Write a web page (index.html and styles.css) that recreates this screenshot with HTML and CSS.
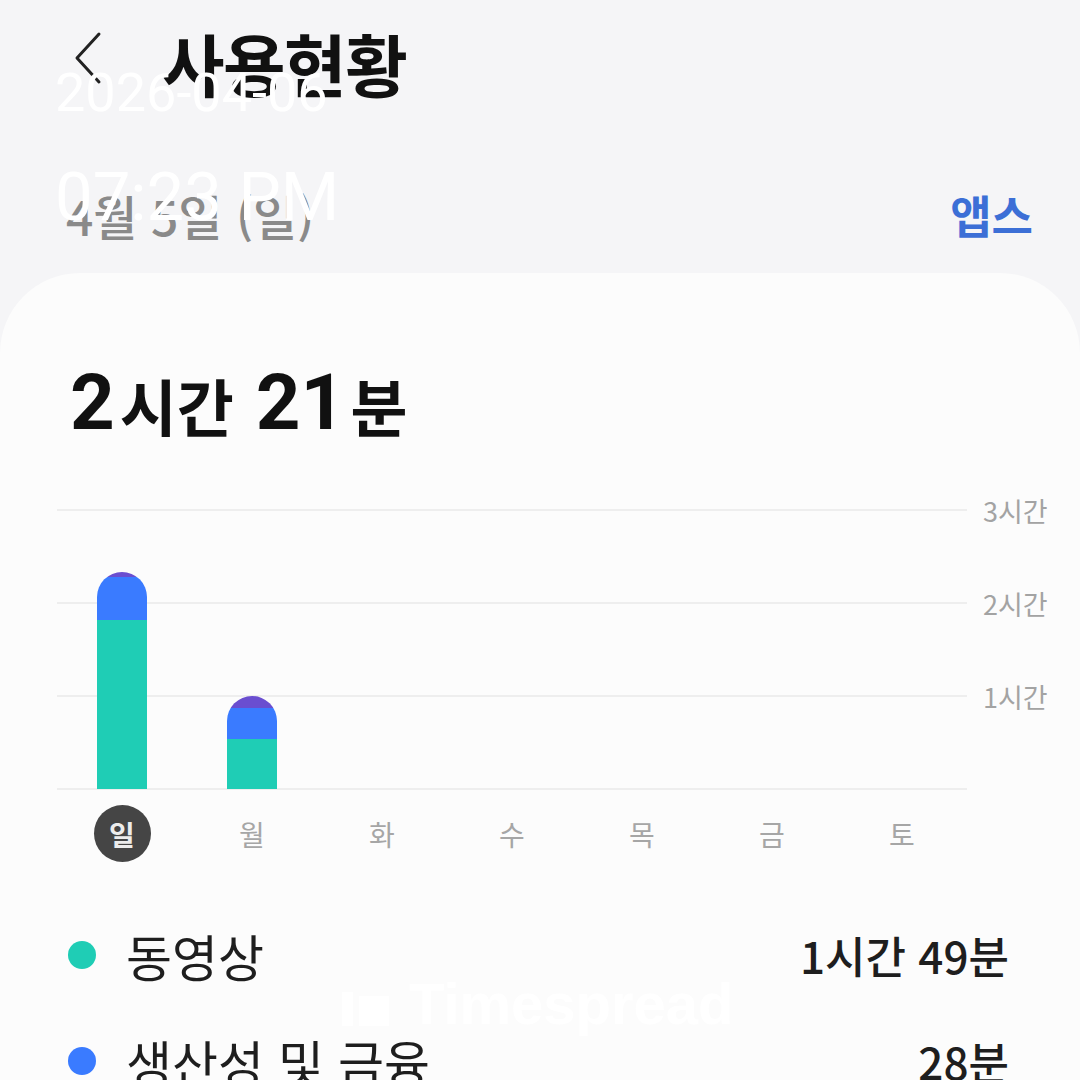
FILE: index.html
```html
<!DOCTYPE html>
<html lang="ko">
<head>
    <meta charset="UTF-8">
    <meta name="viewport" content="width=device-width, initial-scale=1.0">
    <title>사용현황</title>
    <link rel="stylesheet" href="styles.css">
</head>
<body>
    <div class="topbar">
        <svg class="back" width="32" height="54" viewBox="0 0 32 54">
            <polyline points="27,3 5,27 27,51" fill="none" stroke="#222" stroke-width="3" stroke-linecap="round" stroke-linejoin="round"/>
        </svg>
        <h1 class="titulo">사용현황</h1>
    </div>

    <div class="subhead">
        <span class="fecha">4월 5일 (일)</span>
        <span class="apps">앱스</span>
    </div>

    <div class="card">
        <div class="total">
            <span class="num">2</span><span class="unit">시간</span>
            <span class="num">21</span><span class="unit">분</span>
        </div>

        <div class="chart">
            <div class="axis">
                <div class="axis-row"><div class="line"></div><span class="axis-label">3시간</span></div>
                <div class="axis-row"><div class="line"></div><span class="axis-label">2시간</span></div>
                <div class="axis-row"><div class="line"></div><span class="axis-label">1시간</span></div>
                <div class="axis-row last"><div class="line"></div></div>
            </div>
            <div class="bars">
                <div class="col">
                    <div class="bar">
                        <div class="seg morado" style="height: 5px"></div>
                        <div class="seg azul" style="height: 43px"></div>
                        <div class="seg verde" style="height: 169px"></div>
                    </div>
                </div>
                <div class="col">
                    <div class="bar">
                        <div class="seg morado" style="height: 12px"></div>
                        <div class="seg azul" style="height: 31px"></div>
                        <div class="seg verde" style="height: 50px"></div>
                    </div>
                </div>
                <div class="col"></div>
                <div class="col"></div>
                <div class="col"></div>
                <div class="col"></div>
                <div class="col"></div>
            </div>
        </div>

        <div class="days">
            <span class="day activo">일</span>
            <span class="day">월</span>
            <span class="day">화</span>
            <span class="day">수</span>
            <span class="day">목</span>
            <span class="day">금</span>
            <span class="day">토</span>
        </div>

        <div class="legend">
            <div class="legend-row">
                <span class="dot verde"></span>
                <span class="cat">동영상</span>
                <span class="tiempo">1시간 49분</span>
            </div>
            <div class="legend-row">
                <span class="dot azul"></span>
                <span class="cat">생산성 및 금융</span>
                <span class="tiempo">28분</span>
            </div>
        </div>
    </div>

    <!-- sello de la captura -->
    <div class="stamp">
        <div class="stamp-date">2026-04-06</div>
        <div class="stamp-time">07:23 PM</div>
    </div>
    <div class="watermark"><span class="wm-icon"><i></i><b></b></span>Timespread</div>
</body>
</html>
```

FILE: styles.css
```css
body {
    margin: 0;
    width: 1080px;
    height: 1080px;
    overflow: hidden;
    background: #f5f5f7;
    font-family: "Noto Sans CJK KR", sans-serif;
    color: #1c1c1c;
    position: relative;
}
.topbar {
    height: 126px;
    display: flex;
    align-items: center;
    padding-left: 72px;
}
.back {
    margin-top: -10px;
}
.titulo {
    margin: 0 0 0 58px;
    font-size: 68px;
    font-weight: 700;
    letter-spacing: -1.5px;
    line-height: 1;
    color: #111;
}
.subhead {
    height: 117px;
    padding: 30px 47px 0 66px;
    display: flex;
    align-items: center;
    justify-content: space-between;
}
.fecha {
    font-size: 48px;
    font-weight: 500;
    color: #8a8a8a;
}
.apps {
    font-size: 45px;
    font-weight: 700;
    color: #3c6fd6;
}
.card {
    background: #fcfcfc;
    border-radius: 80px 80px 0 0;
    height: 900px;
}
.total {
    padding: 92px 0 0 70px;
    height: 76px;
    display: flex;
    align-items: center;
    font-weight: 700;
    color: #111;
}
.num {
    font-family: "Roboto", "Noto Sans CJK KR", sans-serif;
    font-size: 78px;
    font-weight: 700;
    line-height: 1;
}
.unit {
    font-size: 62px;
    line-height: 1;
    margin: 4px 22px 0 5px;
}
.chart {
    display: grid;
    margin: 49px 0 0 57px;
}
.axis, .bars {
    grid-area: 1 / 1;
}
.axis-row {
    height: 40px;
    margin-bottom: 53px;
    display: flex;
    align-items: center;
}
.axis-row.last {
    margin-bottom: 0;
}
.line {
    width: 910px;
    height: 2px;
    background: #eeeeee;
}
.axis-label {
    margin-left: 16px;
    font-size: 27px;
    color: #a3a3a3;
}
.bars {
    width: 910px;
    height: 299px;
    display: grid;
    grid-template-columns: repeat(7, 130px);
    align-items: end;
}
.col {
    display: flex;
    justify-content: center;
}
.bar {
    width: 50px;
    border-radius: 25px 25px 0 0;
    overflow: hidden;
    display: flex;
    flex-direction: column;
}
.verde { background: #1fcdb5; }
.azul { background: #3a7bff; }
.morado { background: #6a4ed0; }
.days {
    margin: -4px 0 0 57px;
    width: 910px;
    display: grid;
    grid-template-columns: repeat(7, 130px);
    justify-items: center;
}
.day {
    width: 57px;
    height: 57px;
    display: flex;
    align-items: center;
    justify-content: center;
    font-size: 28px;
    color: #a6a6a6;
}
.day.activo {
    background: #454545;
    border-radius: 50%;
    color: #ececec;
    font-weight: 700;
}
.legend {
    margin-top: 40px;
    padding: 0 71px 0 68px;
}
.legend-row {
    height: 106px;
    display: flex;
    align-items: center;
}
.dot {
    width: 28px;
    height: 28px;
    border-radius: 50%;
    margin-right: 30px;
}
.cat {
    flex: 1;
    font-size: 50px;
    color: #1e1e1e;
}
.tiempo {
    font-size: 44px;
    font-weight: 500;
    color: #1e1e1e;
}
.stamp {
    position: absolute;
    left: 55px;
    top: 66px;
    color: #fff;
    font-family: "Roboto", sans-serif;
    line-height: 1;
}
.stamp-date {
    font-size: 54px;
}
.stamp-time {
    margin-top: 44px;
    font-size: 67px;
}
.watermark {
    position: absolute;
    left: 342px;
    top: 970px;
    display: flex;
    align-items: center;
    font-family: "Liberation Sans", sans-serif;
    font-weight: 700;
    font-size: 58px;
    color: #ffffff;
}
.wm-icon {
    display: flex;
    align-items: flex-end;
    gap: 6px;
    margin-right: 20px;
    height: 44px;
}
.wm-icon i {
    width: 11px;
    height: 34px;
    background: #fff;
}
.wm-icon b {
    width: 30px;
    height: 30px;
    background: #fff;
}
```
